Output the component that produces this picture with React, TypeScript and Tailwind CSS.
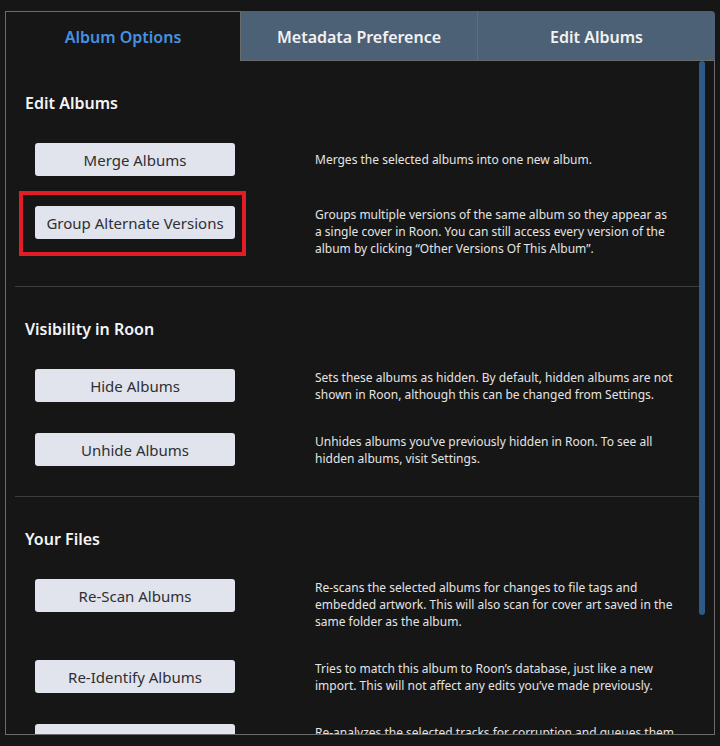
import React from 'react'

type Row = {
  label: string
  desc: string
  marked?: boolean
}

type Section = {
  title: string
  rows: Row[]
}

const sections: Section[] = [
  {
    title: 'Edit Albums',
    rows: [
      { label: 'Merge Albums', desc: 'Merges the selected albums into one new album.' },
      {
        label: 'Group Alternate Versions',
        desc: 'Groups multiple versions of the same album so they appear as a single cover in Roon. You can still access every version of the album by clicking “Other Versions Of This Album”.',
        marked: true,
      },
    ],
  },
  {
    title: 'Visibility in Roon',
    rows: [
      {
        label: 'Hide Albums',
        desc: 'Sets these albums as hidden. By default, hidden albums are not shown in Roon, although this can be changed from Settings.',
      },
      {
        label: 'Unhide Albums',
        desc: 'Unhides albums you’ve previously hidden in Roon. To see all hidden albums, visit Settings.',
      },
    ],
  },
  {
    title: 'Your Files',
    rows: [
      {
        label: 'Re-Scan Albums',
        desc: 'Re-scans the selected albums for changes to file tags and embedded artwork. This will also scan for cover art saved in the same folder as the album.',
      },
      {
        label: 'Re-Identify Albums',
        desc: 'Tries to match this album to Roon’s database, just like a new import. This will not affect any edits you’ve made previously.',
      },
      {
        label: 'Re-Analyze Tracks',
        desc: 'Re-analyzes the selected tracks for corruption and queues them for audio analysis again.',
      },
    ],
  },
]

function OptionRow({ row }: { row: Row }) {
  return (
    <div className="flex items-start">
      <div className="relative shrink-0">
        <button
          type="button"
          className="w-[200px] h-[33px] rounded-[3px] bg-[#e1e4ec] text-[15px] text-[#2f2f33] leading-none pt-[1px]"
        >
          {row.label}
        </button>
        {row.marked && (
          <div className="absolute -left-[16px] -right-[11px] -top-[15px] -bottom-[17px] border-[4px] border-[#e11d26] pointer-events-none" />
        )}
      </div>
      <div className="ml-[80px] flex-1 min-h-[33px] flex items-center pr-[24px]">
        <p className="text-[12px] leading-[17px] text-[#e4e4e4]">{row.desc}</p>
      </div>
    </div>
  )
}

export default function App() {
  const tabs = ['Album Options', 'Metadata Preference', 'Edit Albums']

  return (
    <div
      className="w-[720px] h-[746px] bg-[#161616] pt-[11px] px-[5px] overflow-hidden"
      style={{ fontFamily: '"Noto Sans", "Open Sans", sans-serif' }}
    >
      <div className="flex flex-col h-[724px]">
        {/* Tabs */}
        <div className="flex h-[50px] shrink-0">
          <div className="w-[235px] border-l border-t border-[#6b6b6b] flex items-center justify-center text-[16px] font-semibold text-[#4691e0]">
            {tabs[0]}
          </div>
          <div className="w-[237px] bg-[#4d6176] border-l border-b border-[#6b6b6b] flex items-center justify-center pt-[2px] text-[16px] font-semibold text-[#f2f2f2]">
            {tabs[1]}
          </div>
          <div className="flex-1 bg-[#4d6176] border-l border-b border-[#6b6b6b] rounded-tr-[4px] flex items-center justify-center pt-[2px] text-[16px] font-semibold text-[#f2f2f2]">
            {tabs[2]}
          </div>
        </div>

        {/* Body */}
        <div className="flex-1 flex border-l border-r border-b border-[#6b6b6b] overflow-hidden">
          <div className="flex-1 overflow-hidden">
            {sections.map((s) => (
              <div key={s.title} className="ml-[9px] pl-[10px] pt-[31px] pb-[29px] border-b border-[#3d3d3d]">
                <h2 className="text-[16px] leading-[22px] font-semibold text-[#f4f4f4]">{s.title}</h2>
                <div className="mt-[29px] pl-[10px] flex flex-col gap-[30px]">
                  {s.rows.map((r) => (
                    <OptionRow key={r.label} row={r} />
                  ))}
                </div>
              </div>
            ))}
          </div>
          {/* scrollbar */}
          <div className="w-[6px] mr-[9px] shrink-0">
            <div className="h-[554px] w-[6px] rounded-[3px] bg-[#2d5a86]" />
          </div>
        </div>
      </div>
    </div>
  )
}
